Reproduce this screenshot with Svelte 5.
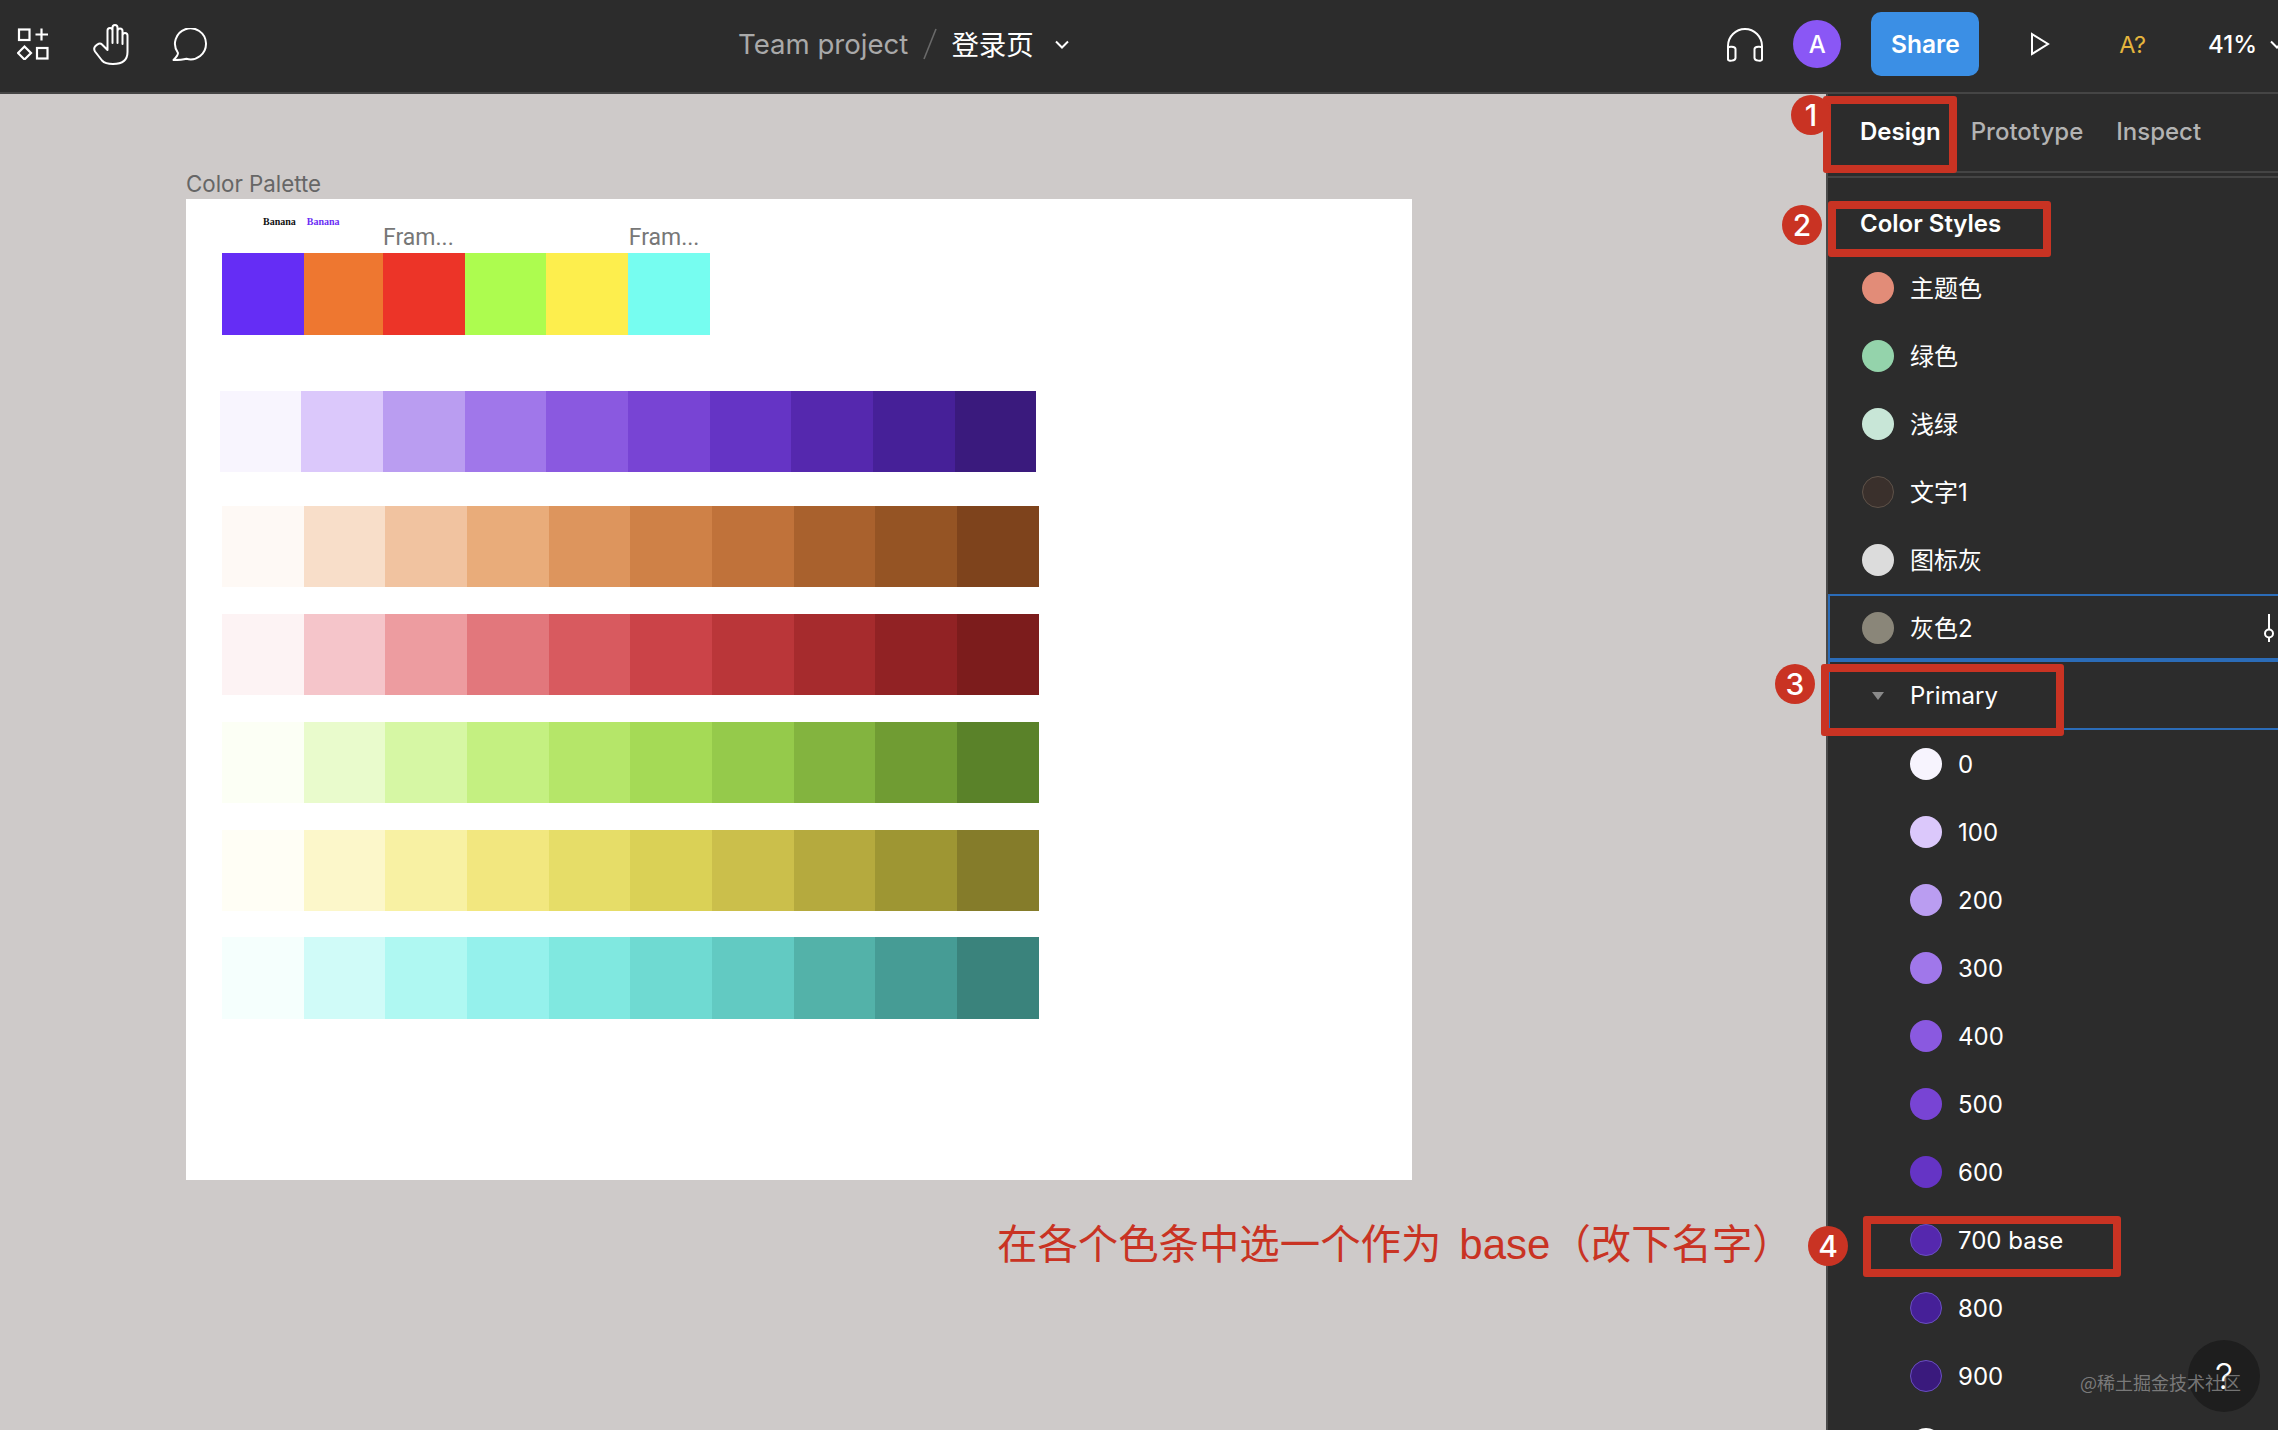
<script>
  const top = ['#652df5', '#ee7730', '#ec3428', '#adfc4f', '#fdee4d', '#76fdf0'];
  const topW = [81.8, 79.4, 81.6, 81.4, 81.5, 82.5];
  const ramps = [
    { c: 'r1', s: ['#f8f5fe','#dbc8fb','#ba9df1','#a077ea','#8a59e0','#7844d4','#6534c5','#5528ae','#462098','#3a1a7d'] },
    { c: 'r2', s: ['#fef9f5','#f8dec9','#f1c3a0','#e9ac7a','#dd955d','#cf8147','#c0723a','#a9612d','#955424','#7e431c'] },
    { c: 'r3', s: ['#fdf3f4','#f5c5ca','#ed9ca0','#e2777c','#d85a5f','#cb4348','#ba3639','#a62b2d','#912224','#7c1c1c'] },
    { c: 'r4', s: ['#fcfff5','#e9fbcc','#d6f7a4','#c4f081','#b5e669','#a5da56','#95ca4b','#83b43f','#709c33','#5a8229'] },
    { c: 'r5', s: ['#fffef5','#fcf7ca','#f8f1a3','#f2e77f','#e6dd68','#dad156','#cbbf4b','#b5aa3e','#9e9633','#857c2a'] },
    { c: 'r6', s: ['#f5fffd','#d0fbf8','#aff8f2','#95f1ec','#80e8e0','#6fdad2','#62cac2','#53b2a9','#469c95','#3a837c'] }
  ];
  const styles = [
    { n: '主题色', c: '#e28c78' },
    { n: '绿色', c: '#94d3ab' },
    { n: '浅绿', c: '#c8e6d7' },
    { n: '文字1', c: '#3a302c', edge: true },
    { n: '图标灰', c: '#dcdcdc' }
  ];
  const primary = [
    { n: '0', c: '#f7f4fe' },
    { n: '100', c: '#dbc8fb' },
    { n: '200', c: '#ba9df1' },
    { n: '300', c: '#a077ea' },
    { n: '400', c: '#8a59e0' },
    { n: '500', c: '#7844d4' },
    { n: '600', c: '#6534c5' },
    { n: '700 base', c: '#5528ae', edge: true },
    { n: '800', c: '#462098', edge: true },
    { n: '900', c: '#3a1a7d', edge: true },
    { n: '', c: '#ffffff' }
  ];
</script>

<div class="app">
  <header class="bar">
    <svg class="i-grid" viewBox="0 0 32 32" fill="none" stroke="#fff" stroke-width="2.2">
      <rect x="2" y="1.5" width="10.5" height="10.5" />
      <path d="M24.5 0.5V12.5M18.5 6.5H31" />
      <path d="M7.5 18.5L14 25L7.5 31.5L1 25Z" />
      <rect x="20" y="20" width="10.5" height="10.5" />
    </svg>
    <svg class="i-hand" viewBox="0 0 36 41" fill="none" stroke="#fff" stroke-width="2" stroke-linejoin="round">
      <path d="M2.5 22C1 23.5 .8 25.500 2 27.500L9 36.500C12 39.800 16 40 20 40C29 40 34.500 36 34.500 28V11.500C34.500 8 29.500 8 29.500 11.500V20V7C29.500 3.500 24.500 3.500 24.500 7V19V3.800C24.500 .2 19.500 .2 19.500 3.800V19V6.500C19.500 3 14.500 3 14.500 6.500V26L9 20.500C7 18.500 4.500 20 2.500 22Z" />
    </svg>
    <svg class="i-comment" viewBox="0 0 36 33" fill="none" stroke="#fff" stroke-width="2" stroke-linejoin="round">
      <path d="M6 25A15.500 15.500 0 1 1 14.500 30.800C10.500 31.800 5.500 32 1.500 32C3.500 30 6 27.500 6 25Z" />
    </svg>

    <div class="title">
      <span class="team">Team project</span>
      <svg class="slash" viewBox="0 0 14 32"><path d="M13 1L1 31" stroke="#6a6a6a" stroke-width="1.600" /></svg>
      <span class="page">登录页</span>
      <svg class="chev" viewBox="0 0 14 9" fill="none" stroke="#fff" stroke-width="2"><path d="M1 1.500L7 7.500L13 1.500" /></svg>
    </div>

    <div class="right">
      <svg class="i-head" viewBox="0 0 38 35" fill="none" stroke="#fff" stroke-width="2" stroke-linejoin="round">
        <path d="M2 26V19A17 17 0 0 1 36 19V26" />
        <path d="M2 21C2 19 9.500 19.500 9.500 22V31C9.500 34 2 34.500 2 32.500Z" />
        <path d="M36 21C36 19 28.500 19.500 28.500 22V31C28.500 34 36 34.500 36 32.500Z" />
      </svg>
      <div class="avatar">A</div>
      <button class="share">Share</button>
      <svg class="i-play" viewBox="0 0 20 24" fill="none" stroke="#fff" stroke-width="2"><path d="M2 2L18 12L2 22Z" /></svg>
      <span class="missing">A?</span>
      <span class="zoomval">41%</span>
      <svg class="chev2" viewBox="0 0 14 9" fill="none" stroke="#fff" stroke-width="2"><path d="M1 1.500L7 7.500L13 1.500" /></svg>
    </div>
  </header>

  <main class="main">
    <section class="canvas">
      <div class="frame-label">Color Palette</div>
      <div class="frame">
        <div class="labels">
          <span class="banana black">Banana</span>
          <span class="banana violet">Banana</span>
          <span class="fram one">Fram...</span>
          <span class="fram two">Fram...</span>
        </div>
        <div class="base">
          {#each top as c, i}
            <div style="background:{c};width:{topW[i]}px"></div>
          {/each}
        </div>
        {#each ramps as r}
          <div class="ramp {r.c}">
            {#each r.s as c}
              <div style="background:{c}"></div>
            {/each}
          </div>
        {/each}
      </div>
    </section>

    <aside class="panel">
      <nav class="tabs">
        <span class="tab on">Design</span>
        <span class="tab proto">Prototype</span>
        <span class="tab">Inspect</span>
      </nav>
      <h2 class="head">Color Styles</h2>
      {#each styles as s}
        <div class="row cjk">
          <i class="dot" class:edge={s.edge} style="background:{s.c}"></i>
          <span>{s.n}</span>
        </div>
      {/each}
      <div class="row cjk selected">
        <i class="dot" style="background:#8a8679"></i>
        <span>灰色2</span>
        <svg class="slider" viewBox="0 0 12 28" fill="none" stroke="#fff" stroke-width="2">
          <path d="M6 0V15M6 24V28" />
          <circle cx="6" cy="19.500" r="4" />
        </svg>
      </div>
      <div class="row group">
        <i class="tri"></i>
        <span>Primary</span>
      </div>
      {#each primary as s}
        <div class="row sub">
          <i class="dot" class:edge2={s.edge} style="background:{s.c}"></i>
          {#if s.n}<span>{s.n}</span>{/if}
        </div>
      {/each}
    </aside>
  </main>

  <div class="box b1"></div>
  <div class="box b2"></div>
  <div class="box b3"></div>
  <div class="box b4"></div>
  <div class="badge n1">1</div>
  <div class="badge n2">2</div>
  <div class="badge n3">3</div>
  <div class="badge n4">4</div>
  <div class="note">在各个色条中选一个作为<span class="latin">base</span>（改下名字）</div>
  <div class="help">?</div>
  <div class="mark">@稀土掘金技术社区</div>
</div>

<style>
  :global(body) { margin: 0; }
  .app {
    position: relative;
    width: 2278px;
    height: 1430px;
    overflow: hidden;
    display: flex;
    flex-direction: column;
    background: #cecac9;
    font-family: Inter, "Noto Sans CJK SC", sans-serif;
    color: #fff;
  }

  .bar {
    flex: none;
    height: 92px;
    border-bottom: 2px solid #454545;
    background: #2c2c2c;
    display: flex;
    align-items: center;
    padding-left: 17px;
  }
  .i-grid { width: 32px; height: 32px; flex: none; margin-top: -4px; }
  .i-hand { width: 36px; height: 41px; flex: none; margin-left: 44px; margin-top: -4px; }
  .i-comment { width: 36px; height: 33px; flex: none; margin-left: 43px; margin-top: -4px; }
  .title { display: flex; align-items: center; margin-left: 530px; margin-top: -4px; font-size: 27.600px; }
  .team { color: #a9a9a9; }
  .slash { width: 14px; height: 32px; margin-left: 15px; }
  .page { margin-left: 14px; margin-top: -2px; font-size: 27.500px; }
  .chev { width: 14px; height: 9px; margin-left: 21px; }
  .right { display: flex; align-items: center; margin-left: auto; margin-right: -6px; margin-top: -4px; }
  .i-head { width: 38px; height: 35px; }
  .avatar {
    width: 48px; height: 48px; margin-left: 29px; border-radius: 50%;
    background: #8a57f5; display: flex; align-items: center; justify-content: center;
    font-size: 24px; font-weight: 500;
  }
  .share {
    width: 108px; height: 64px; margin-left: 30px; border: 0; border-radius: 10px;
    background: #3b8fe5; color: #fff; font: 600 24.500px Inter, sans-serif; padding: 0;
  }
  .i-play { width: 20px; height: 24px; margin-left: 51px; }
  .missing { margin-left: 69px; font-size: 23.500px; color: #e5b53d; }
  .zoomval { margin-left: 62px; font-size: 24px; font-weight: 500; }
  .chev2 { width: 14px; height: 9px; margin-left: 13px; }

  .main { flex: 1; display: flex; min-height: 0; }
  .canvas { flex: 1; padding-left: 186px; min-width: 0; }
  .frame-label {
    height: 105px; box-sizing: border-box; padding-top: 76px;
    font-size: 22.300px; line-height: 28px; color: #666;
  }
  .frame {
    width: 1226px; height: 981px; background: #fff;
    box-sizing: border-box; padding-left: 36px;
  }
  .labels { position: relative; height: 54px; display: flex; }
  .banana {
    font: 700 10px/12px "Liberation Serif", serif; margin-top: 17px;
  }
  .black { margin-left: 41px; color: #111; }
  .violet { margin-left: 11px; color: #6a2df5; }
  .fram { font: 400 23px/28px Roboto, sans-serif; color: #777; margin-top: 25px; }
  .one { margin-left: 43.500px; }
  .two { margin-left: 175px; }
  .base { display: flex; height: 82px; }
  .ramp { display: flex; width: 816.500px; height: 81.700px; }
  .ramp div { flex: 1; }
  .r1 { margin: 55.700px 0 0 -2.400px; }
  .r2 { margin-top: 33.300px; }
  .r3 { margin-top: 26.300px; }
  .r4 { margin-top: 26.300px; }
  .r5 { margin-top: 26.300px; }
  .r6 { margin-top: 26px; }

  .panel {
    flex: none; width: 450px; background: #2c2c2c; border-left: 2px solid #4a4a4a;
  }
  .tabs {
    height: 79px; box-sizing: border-box; padding: 0 0 0 32px;
    display: flex; align-items: center; gap: 32px;
    border-bottom: 2px solid #444;
    font-size: 24px; font-weight: 500; color: #b3b3b3;
  }
  .tab { margin-top: -3px; }
  .proto { margin: -3px 1px 0 -2px; }
  .tab.on { color: #fff; font-weight: 600; }
  .head {
    margin: 3px 0 0; height: 78px; box-sizing: border-box;
    border-top: 2px solid #444;
    padding: 29px 0 0 32px; font-size: 24px; line-height: 34px; font-weight: 600;
  }
  .row {
    height: 68px; box-sizing: border-box; display: flex; align-items: center;
    padding-left: 34px; font-size: 24px; position: relative;
  }
  .cjk span { margin-top: -3px; }
  .group span { margin-top: -2px; }
  .dot {
    display: block; width: 32px; height: 32px; border-radius: 50%;
    margin-right: 16px; flex: none; box-sizing: border-box;
  }
  .dot.edge { border: 1px solid #5e5249; }
  .dot.edge2 { border: 1px solid #6a4fc0; }
  .sub { padding-left: 82px; }
  .selected {
    border: 2px solid #2b6cb8; border-bottom-width: 4px; border-right: 0; padding-left: 32px; padding-top: 2px;
  }
  .slider { position: absolute; right: 3px; top: 18px; width: 12px; height: 28px; }
  .group {
    border-left: 2px solid #2b6cb8; border-bottom: 2px solid #2b6cb8; padding-left: 42px; padding-top: 2px;
  }
  .tri {
    width: 0; height: 0; margin-right: 26px;
    border-left: 6px solid transparent; border-right: 6px solid transparent;
    border-top: 8px solid #8a8a8a;
  }

  .box {
    position: absolute; box-sizing: border-box; border: 8px solid #c93323; border-radius: 3px;
  }
  .b1 { left: 1823px; top: 96px; width: 134px; height: 77px; }
  .b2 { left: 1828px; top: 201px; width: 223px; height: 56px; }
  .b3 { left: 1821px; top: 664px; width: 243px; height: 72px; }
  .b4 { left: 1863px; top: 1216px; width: 258px; height: 61px; }
  .badge {
    position: absolute; width: 40px; height: 40px; border-radius: 50%;
    background: #c93323; color: #fff; display: flex; align-items: center; justify-content: center;
    font: 500 30px Inter, sans-serif;
  }
  .n1 { left: 1791px; top: 95px; }
  .n2 { left: 1782px; top: 205px; }
  .n3 { left: 1775px; top: 664px; }
  .n4 { left: 1808px; top: 1226px; }
  .note {
    position: absolute; left: 997px; top: 1221px; white-space: nowrap;
    font: 400 40.400px/48px "Liberation Sans", "Noto Sans CJK SC", sans-serif; color: #c93323;
  }
  .latin { font-size: 42px; margin-left: 18px; }
  .help {
    position: absolute; left: 2188px; top: 1340px; width: 72px; height: 72px; border-radius: 50%;
    background: #1e1e1e; display: flex; align-items: center; justify-content: center;
    font: 300 36px Inter, sans-serif; color: #fff;
  }
  .mark {
    position: absolute; left: 2080px; top: 1370px; white-space: nowrap;
    font: 400 18px/24px "Noto Sans CJK SC", sans-serif; color: rgba(190, 190, 190, .55);
  }
</style>
